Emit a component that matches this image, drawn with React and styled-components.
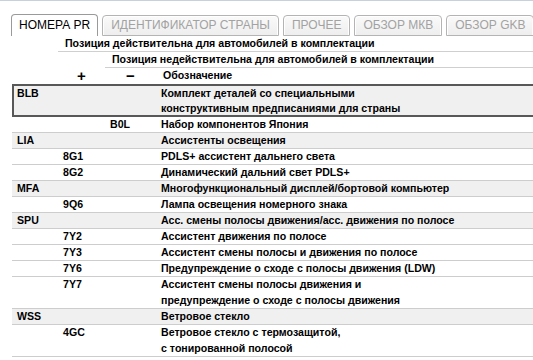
import React from "react";
import styled, { createGlobalStyle } from "styled-components";

const Global = createGlobalStyle`
  html, body { margin: 0; padding: 0; background: #fff; }
  body { font-family: "Liberation Sans", Arial, sans-serif; }
`;

const Page = styled.div`
  width: 533px;
  height: 360px;
  overflow: hidden;
  border-top: 1px solid #c6d1dd;
  box-sizing: border-box;
  background: #fff;
`;

const TabBar = styled.div`
  display: flex;
  align-items: flex-end;
  gap: 4px;
  height: 22px;
  margin-top: 13px;
  padding-left: 11px;
`;

const Tab = styled.div`
  box-sizing: border-box;
  height: ${(p) => (p.$active ? "22px" : "21px")};
  padding: 0 ${(p) => (p.$active ? "7px" : "8px")};
  border: 1px solid ${(p) => (p.$active ? "#9a9a9a" : "#b4b4b4")};
  border-bottom: ${(p) => (p.$active ? "none" : "1px solid #b4b4b4")};
  border-radius: 4px 4px 0 0;
  background: ${(p) => (p.$active ? "#fff" : "linear-gradient(#fafafa, #eeeeee)")};
  box-shadow: ${(p) => (p.$active ? "none" : "inset 1px 1px 0 #fff, inset -1px 0 0 #fff")};
  color: ${(p) => (p.$active ? "#000" : "#a2a2a2")};
  font-size: 12px;
  line-height: ${(p) => (p.$active ? "21px" : "19px")};
  white-space: nowrap;
`;

const Table = styled.div`
  margin-left: 12px;
  font-size: 10.6px;
  font-weight: bold;
  color: #000;
`;

const HeadRow = styled.div`
  display: grid;
  grid-template-columns: 46px 47px 51px 1fr;
  height: 16px;
`;

const HeadCell = styled.div`
  grid-column: ${(p) => p.$span};
  box-sizing: border-box;
  height: 16px;
  line-height: 15px;
  padding-left: ${(p) => (p.$center ? "0" : "7px")};
  text-align: ${(p) => (p.$center ? "center" : "left")};
  font-size: ${(p) => (p.$center ? "15px" : "inherit")};
  border-bottom: ${(p) => (p.$line ? "1px solid #cfcfcf" : "none")};
  white-space: nowrap;
`;

const Row = styled.div`
  display: grid;
  grid-template-columns: ${(p) => (p.$boxed ? "44px" : "46px")} 47px 51px 1fr;
  box-sizing: border-box;
  background: ${(p) => (p.$parent ? "#f0f0f0" : "#fff")};
  border: ${(p) => (p.$boxed ? "2px solid #585858" : "none")};
  border-right: none;
  border-bottom: ${(p) => (p.$boxed ? "2px solid #585858" : "1px solid #cdcdcd")};
  line-height: ${(p) => (p.$boxed ? "14.5px" : p.$lines > 1 ? "15.5px" : "15px")};
`;

const Cell = styled.div`
  padding-left: ${(p) => (p.$first ? "3px" : "5px")};
  white-space: nowrap;
`;

const rows = [
  { c1: "BLB", desc: ["Комплект деталей со специальными", "конструктивным предписаниями для страны"], parent: true, boxed: true },
  { c3: "B0L", desc: ["Набор компонентов Япония"] },
  { c1: "LIA", desc: ["Ассистенты освещения"], parent: true },
  { c2: "8G1", desc: ["PDLS+ ассистент дальнего света"] },
  { c2: "8G2", desc: ["Динамический дальний свет PDLS+"] },
  { c1: "MFA", desc: ["Многофункциональный дисплей/бортовой компьютер"], parent: true },
  { c2: "9Q6", desc: ["Лампа освещения номерного знака"] },
  { c1: "SPU", desc: ["Асс. смены полосы движения/асс. движения по полосе"], parent: true },
  { c2: "7Y2", desc: ["Ассистент движения по полосе"] },
  { c2: "7Y3", desc: ["Ассистент смены полосы и движения по полосе"] },
  { c2: "7Y6", desc: ["Предупреждение о сходе с полосы движения (LDW)"] },
  { c2: "7Y7", desc: ["Ассистент смены полосы движения и", "предупреждение о сходе с полосы движения"] },
  { c1: "WSS", desc: ["Ветровое стекло"], parent: true },
  { c2: "4GC", desc: ["Ветровое стекло с термозащитой,", "с тонированной полосой"] },
];

const tabs = ["НОМЕРА PR", "ИДЕНТИФИКАТОР СТРАНЫ", "ПРОЧЕЕ", "ОБЗОР МКВ", "ОБЗОР GKB"];

export default function App() {
  return (
    <Page>
      <Global />
      <TabBar>
        {tabs.map((t, i) => (
          <Tab key={t} $active={i === 0}>{t}</Tab>
        ))}
      </TabBar>
      <Table>
        <HeadRow>
          <HeadCell $span="2 / 5" $line>Позиция действительна для автомобилей в комплектации</HeadCell>
        </HeadRow>
        <HeadRow>
          <HeadCell $span="3 / 5" $line>Позиция недействительна для автомобилей в комплектации</HeadCell>
        </HeadRow>
        <HeadRow>
          <HeadCell $span="2 / 3" $center>+</HeadCell>
          <HeadCell $span="3 / 4" $center>−</HeadCell>
          <HeadCell $span="4 / 5">Обозначение</HeadCell>
        </HeadRow>
        {rows.map((r, i) => (
          <Row key={i} $parent={r.parent} $boxed={r.boxed} $lines={r.desc.length}>
            <Cell $first={r.boxed}>{r.c1 || ""}</Cell>
            <Cell>{r.c2 || ""}</Cell>
            <Cell>{r.c3 || ""}</Cell>
            <Cell>
              {r.desc.map((d, j) => (
                <div key={j}>{d}</div>
              ))}
            </Cell>
          </Row>
        ))}
      </Table>
    </Page>
  );
}
